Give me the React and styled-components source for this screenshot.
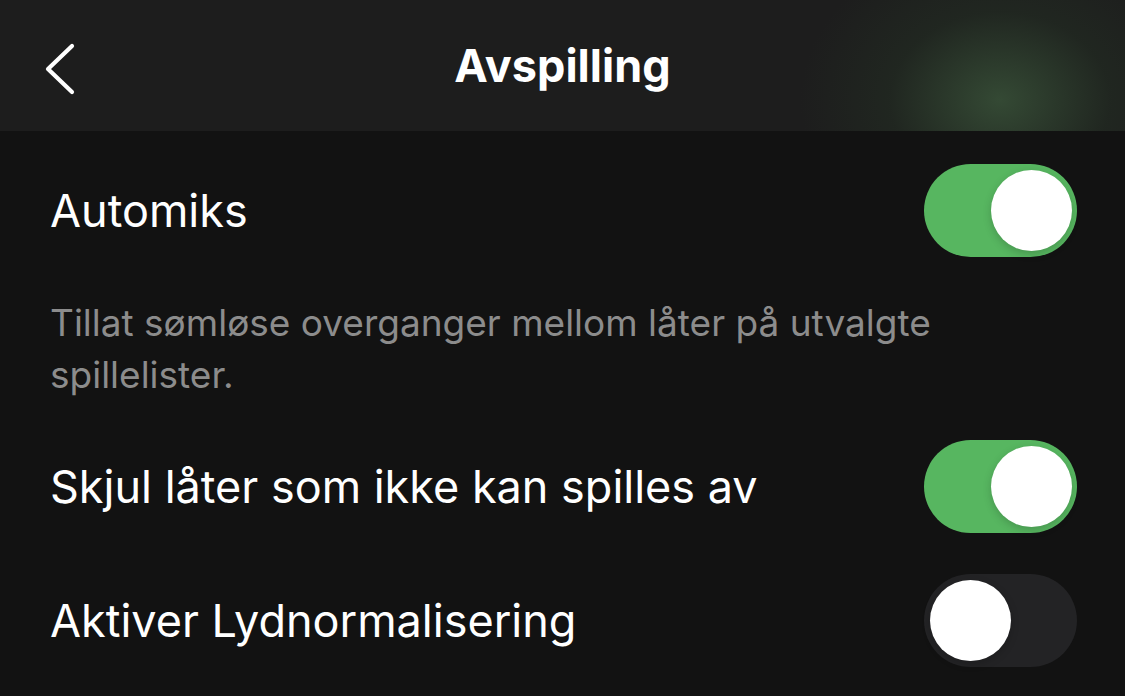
import React from 'react'
import styled, { createGlobalStyle } from 'styled-components'

const GlobalStyle = createGlobalStyle`
  html, body {
    margin: 0;
    padding: 0;
    background: #121212;
  }
  body {
    font-family: Inter, 'Noto Sans', sans-serif;
    color: #fff;
    -webkit-font-smoothing: antialiased;
  }
`

const Page = styled.div`
  width: 1125px;
  height: 696px;
  overflow: hidden;
  background: #121212;
`

const Header = styled.header`
  position: relative;
  height: 131px;
  display: flex;
  align-items: center;
  justify-content: center;
  background:
    radial-gradient(ellipse 200px 160px at 1000px 100px, rgba(62, 92, 62, 0.7), rgba(40, 60, 40, 0.3) 55%, rgba(28, 28, 28, 0) 100%),
    #1d1d1d;
`

const BackButton = styled.button`
  position: absolute;
  left: 38px;
  top: 40px;
  width: 40px;
  height: 56px;
  padding: 0;
  border: 0;
  background: transparent;
  display: flex;
  align-items: center;
  justify-content: center;
  cursor: pointer;
`

const Title = styled.h1`
  margin: 0;
  font-size: 45px;
  font-weight: 700;
  color: #fff;
`

const Content = styled.div`
  padding: 0 48px 0 50px;
  display: flex;
  flex-direction: column;
`

const Row = styled.div`
  display: flex;
  align-items: center;
  justify-content: space-between;
  height: 93px;
  margin-top: ${(props) => props.gap}px;
`

const Label = styled.span`
  font-size: 45px;
  color: #fff;
`

const Description = styled.p`
  margin: 40px 0 0 0;
  font-size: 37px;
  line-height: 52px;
  color: #8c8c8c;
  max-width: 960px;
`

const Track = styled.div`
  position: relative;
  width: 153px;
  height: 93px;
  border-radius: 47px;
  background: ${(props) => (props.on ? '#57b660' : '#232325')};
  flex-shrink: 0;
`

const Knob = styled.div`
  position: absolute;
  top: 6px;
  left: ${(props) => (props.on ? '67px' : '6px')};
  width: 81px;
  height: 81px;
  border-radius: 50%;
  background: #fff;
  box-shadow: 0 3px 8px rgba(0, 0, 0, 0.18);
`

const Toggle = ({ on }) => (
  <Track on={on ? 1 : 0}>
    <Knob on={on ? 1 : 0} />
  </Track>
)

const App = () => (
  <Page>
    <GlobalStyle />
    <Header>
      <BackButton aria-label="Tilbake">
        <svg width="34" height="54" viewBox="0 0 34 54">
          <polyline
            points="31,5 7,28 31,51"
            fill="none"
            stroke="#fff"
            strokeWidth="4.2"
            strokeLinecap="round"
            strokeLinejoin="round"
          />
        </svg>
      </BackButton>
      <Title>Avspilling</Title>
    </Header>
    <Content>
      <Row gap={33}>
        <Label>Automiks</Label>
        <Toggle on />
      </Row>
      <Description>
        Tillat sømløse overganger mellom låter på utvalgte spillelister.
      </Description>
      <Row gap={39}>
        <Label>Skjul låter som ikke kan spilles av</Label>
        <Toggle on />
      </Row>
      <Row gap={41}>
        <Label>Aktiver Lydnormalisering</Label>
        <Toggle />
      </Row>
    </Content>
  </Page>
)

export default App
